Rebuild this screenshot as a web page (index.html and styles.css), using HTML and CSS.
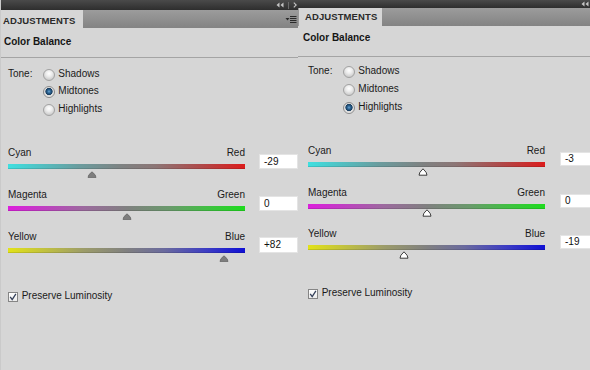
FILE: index.html
```html
<!DOCTYPE html>
<html>
<head>
<meta charset="utf-8">
<link rel="stylesheet" href="styles.css">
</head>
<body>
<div class="screen">
  <section class="panel panel-left">
    <div class="topbar">
      <svg class="dbl" width="8" height="6" viewBox="0 0 8 6"><path d="M3.5 0.5 L0.5 3 L3.5 5.5 Z M7.5 0.5 L4.5 3 L7.5 5.5 Z" fill="#c4c4c4"/></svg>
      <span class="sep"></span>
      <svg class="gt" width="4" height="6" viewBox="0 0 4 6"><path d="M0.8 0.6 L3.2 3 L0.8 5.4" fill="none" stroke="#c4c4c4" stroke-width="1.1"/></svg>
    </div>
    <div class="tabrow">
      <div class="tab">ADJUSTMENTS</div>
      <svg class="menu" width="12" height="7" viewBox="0 0 12 7"><path d="M0.5 2 L4.5 2 L2.5 4.5 Z" fill="#2a2a2a"/><path d="M5 0.5 H11.5 M5 2.5 H11.5 M5 4.5 H11.5 M5 6.5 H11.5" stroke="#2a2a2a" stroke-width="1"/></svg>
    </div>
    <div class="content">
      <h2 class="title">Color Balance</h2>
      <hr class="divider">
      <div class="tone">
        <div class="tone-label"><span>Tone:</span></div>
        <ul class="radios">
          <li class="radio-row"><span class="radio"></span><span class="rlabel">Shadows</span></li>
          <li class="radio-row"><span class="radio on"></span><span class="rlabel">Midtones</span></li>
          <li class="radio-row"><span class="radio"></span><span class="rlabel">Highlights</span></li>
        </ul>
      </div>
      <div class="sliders">
        <div class="slider">
          <div class="slider-main">
            <div class="labels"><span>Cyan</span><span>Red</span></div>
            <div class="track track-cr"><svg class="thumb" style="left:35.5%" width="10" height="7" viewBox="0 0 10 7"><path d="M1 6.5 Q0.8 4 5 0.8 Q9.2 4 9 6.5 Z" fill="#7e7e7e" stroke="#6a6a6a" stroke-width="0.8"/></svg></div>
          </div>
          <div class="value">-29</div>
        </div>
        <div class="slider">
          <div class="slider-main">
            <div class="labels"><span>Magenta</span><span>Green</span></div>
            <div class="track track-mg"><svg class="thumb" style="left:50%" width="10" height="7" viewBox="0 0 10 7"><path d="M1 6.5 Q0.8 4 5 0.8 Q9.2 4 9 6.5 Z" fill="#7e7e7e" stroke="#6a6a6a" stroke-width="0.8"/></svg></div>
          </div>
          <div class="value">0</div>
        </div>
        <div class="slider">
          <div class="slider-main">
            <div class="labels"><span>Yellow</span><span>Blue</span></div>
            <div class="track track-yb"><svg class="thumb" style="left:91%" width="10" height="7" viewBox="0 0 10 7"><path d="M1 6.5 Q0.8 4 5 0.8 Q9.2 4 9 6.5 Z" fill="#7e7e7e" stroke="#6a6a6a" stroke-width="0.8"/></svg></div>
          </div>
          <div class="value">+82</div>
        </div>
      </div>
      <div class="preserve">
        <span class="check"><svg width="8" height="8" viewBox="0 0 8 8"><path d="M1.2 3.8 L3.2 6.6 L6.9 0.9" fill="none" stroke="#34405a" stroke-width="1.3"/></svg></span>
        <span>Preserve Luminosity</span>
      </div>
    </div>
  </section>

  <section class="panel panel-right">
    <div class="topbar">
      <svg class="dbl" width="8" height="6" viewBox="0 0 8 6"><path d="M3.5 0.5 L0.5 3 L3.5 5.5 Z M7.5 0.5 L4.5 3 L7.5 5.5 Z" fill="#c4c4c4"/></svg>
    </div>
    <div class="tabrow">
      <div class="tab">ADJUSTMENTS</div>
    </div>
    <div class="content">
      <h2 class="title">Color Balance</h2>
      <hr class="divider">
      <div class="tone">
        <div class="tone-label"><span>Tone:</span></div>
        <ul class="radios">
          <li class="radio-row"><span class="radio"></span><span class="rlabel">Shadows</span></li>
          <li class="radio-row"><span class="radio"></span><span class="rlabel">Midtones</span></li>
          <li class="radio-row"><span class="radio on"></span><span class="rlabel">Highlights</span></li>
        </ul>
      </div>
      <div class="sliders">
        <div class="slider">
          <div class="slider-main">
            <div class="labels"><span>Cyan</span><span>Red</span></div>
            <div class="track track-cr"><svg class="thumb" style="left:48.5%" width="10" height="8" viewBox="0 0 10 8"><path d="M1 7.2 Q0.8 4.5 5 0.8 Q9.2 4.5 9 7.2 Z" fill="#ffffff" stroke="#2a2a2a" stroke-width="0.9"/></svg></div>
          </div>
          <div class="value">-3</div>
        </div>
        <div class="slider">
          <div class="slider-main">
            <div class="labels"><span>Magenta</span><span>Green</span></div>
            <div class="track track-mg"><svg class="thumb" style="left:50%" width="10" height="8" viewBox="0 0 10 8"><path d="M1 7.2 Q0.8 4.5 5 0.8 Q9.2 4.5 9 7.2 Z" fill="#ffffff" stroke="#2a2a2a" stroke-width="0.9"/></svg></div>
          </div>
          <div class="value">0</div>
        </div>
        <div class="slider">
          <div class="slider-main">
            <div class="labels"><span>Yellow</span><span>Blue</span></div>
            <div class="track track-yb"><svg class="thumb" style="left:40.5%" width="10" height="8" viewBox="0 0 10 8"><path d="M1 7.2 Q0.8 4.5 5 0.8 Q9.2 4.5 9 7.2 Z" fill="#ffffff" stroke="#2a2a2a" stroke-width="0.9"/></svg></div>
          </div>
          <div class="value">-19</div>
        </div>
      </div>
      <div class="preserve">
        <span class="check"><svg width="8" height="8" viewBox="0 0 8 8"><path d="M1.2 3.8 L3.2 6.6 L6.9 0.9" fill="none" stroke="#34405a" stroke-width="1.3"/></svg></span>
        <span>Preserve Luminosity</span>
      </div>
    </div>
  </section>
</div>
</body>
</html>
```
FILE: styles.css
```css
* { box-sizing: border-box; margin: 0; padding: 0; }

body {
  width: 590px;
  height: 370px;
  overflow: hidden;
  background: #d6d6d6;
  font-family: "Liberation Sans", Arial, sans-serif;
  font-size: 10px;
  color: #1a1a1a;
}

.screen {
  display: flex;
  height: 370px;
}

.panel {
  flex: none;
  width: 298px;
  display: flex;
  flex-direction: column;
}

.panel-left {
  border-left: 1px solid #cacaca;
}

.panel-right {
  width: 292px;
  overflow: hidden;
}

/* dark top bar */
.topbar {
  height: 10px;
  background: linear-gradient(#4a4a4a, #2e2e2e);
  display: flex;
  align-items: center;
  justify-content: flex-end;
  gap: 2px;
  padding-right: 1px;
}

.panel-right .topbar { height: 8px; padding-right: 1px; }

.sep {
  width: 1px;
  height: 7px;
  background: #6a6a6a;
  margin: 0 2px;
}

/* tab strip */
.tabrow {
  height: 18px;
  display: flex;
  align-items: center;
  background: linear-gradient(#9c9c9c, #838383);
}

.tab {
  align-self: stretch;
  width: 82px;
  background: #d6d6d6;
  font-weight: bold;
  font-size: 9.5px;
  line-height: 12px;
  padding: 5px 0 0 2px;
  color: #2a2a2a;
  letter-spacing: 0.1px;
}

.panel-right .tab {
  width: 84px;
  padding: 3px 0 0 6px;
  border-left: 1px solid #9a9a9a;
}

.menu {
  margin-left: auto;
  margin-right: 1px;
  margin-top: 1px;
}

/* content */
.title {
  font-size: 10px;
  font-weight: bold;
  line-height: 12px;
  margin-top: 8px;
  padding-left: 3px;
  color: #151515;
}

.panel-right .title {
  margin-top: 6px;
  padding-left: 5px;
}

.divider {
  border: 0;
  border-top: 1px solid #a4a4a4;
  margin-top: 9px;
}

.panel-right .divider { margin-top: 11.5px; }

.tone {
  display: flex;
  margin-top: 8.5px;
  padding-left: 7px;
}

.panel-right .tone {
  margin-top: 6.6px;
  padding-left: 10px;
}

.tone-label {
  width: 35.3px;
  height: 17.3px;
  display: flex;
  align-items: center;
}

.tone-label span,
.rlabel {
  line-height: 12px;
  margin-bottom: 2px;
}

.radios { list-style: none; }

.radio-row {
  display: flex;
  align-items: center;
  height: 17.3px;
}

.panel-right .radio-row,
.panel-right .tone-label { height: 18px; }

.radio {
  width: 12px;
  height: 12px;
  border-radius: 50%;
  border: 1px solid #a2a2a2;
  background: radial-gradient(circle at 50% 35%, #ffffff 0, #ececec 3px, #cfcfcf 6px);
  margin-right: 3px;
  flex: none;
}

.radio.on {
  border-color: #8c8c8c;
  background: radial-gradient(circle at 50% 45%, #6aa6d6 0, #2d6594 1.6px, #173c5e 3.3px, #d8d8d8 3.9px, #e6e6e6 5px);
}

/* sliders */
.sliders {
  margin-top: 28.9px;
  padding-left: 7px;
}

.panel-right .sliders {
  margin-top: 28px;
  padding-left: 10px;
}

.slider {
  display: flex;
  height: 22px;
  margin-bottom: 19.7px;
}

.slider-main {
  width: 237px;
  flex: none;
}

.labels {
  display: flex;
  justify-content: space-between;
  line-height: 12px;
}

.track {
  position: relative;
  height: 5px;
  margin-top: 5px;
  box-shadow: inset 0 -1px 0 rgba(0, 0, 0, 0.12);
}

.track-cr {
  background: linear-gradient(90deg, #3ee0e0 0%, #4fc4c6 12%, #6a9c9e 30%, #7e8282 48%, #8c7676 62%, #b04848 82%, #dc1c1c 100%);
}

.track-mg {
  background: linear-gradient(90deg, #dc1edc 0%, #c23cc4 14%, #9c6a9e 32%, #808080 50%, #6a9a6c 68%, #3cc43e 86%, #1edc1e 100%);
}

.track-yb {
  background: linear-gradient(90deg, #e2e218 0%, #c4c43c 14%, #9c9c6a 32%, #808080 50%, #6a6a9e 66%, #3c3cc4 84%, #1010d4 100%);
}

.thumb {
  position: absolute;
  top: 7px;
  margin-left: -5px;
}

.panel-right .thumb { top: 5.6px; }

.value {
  flex: none;
  margin-left: 14px;
  margin-top: 6.7px;
  width: 39px;
  height: 15.3px;
  background: #ffffff;
  border: 1px solid #e4e4e4;
  padding-left: 4px;
  line-height: 13px;
  color: #111;
}

.panel-right .value {
  margin-left: 15px;
  margin-top: 7px;
  height: 14px;
  line-height: 12px;
}

/* preserve luminosity */
.preserve {
  display: flex;
  align-items: flex-start;
  line-height: 12px;
  margin-top: 36.9px;
  padding-left: 7px;
}

.panel-right .preserve {
  margin-top: 36.5px;
  padding-left: 10px;
}

.check {
  width: 10px;
  height: 10px;
  margin-top: 2.5px;
  margin-right: 3.7px;
  border: 1px solid #858585;
  background: linear-gradient(#ffffff, #ececec);
  display: flex;
  align-items: center;
  justify-content: center;
}
```
